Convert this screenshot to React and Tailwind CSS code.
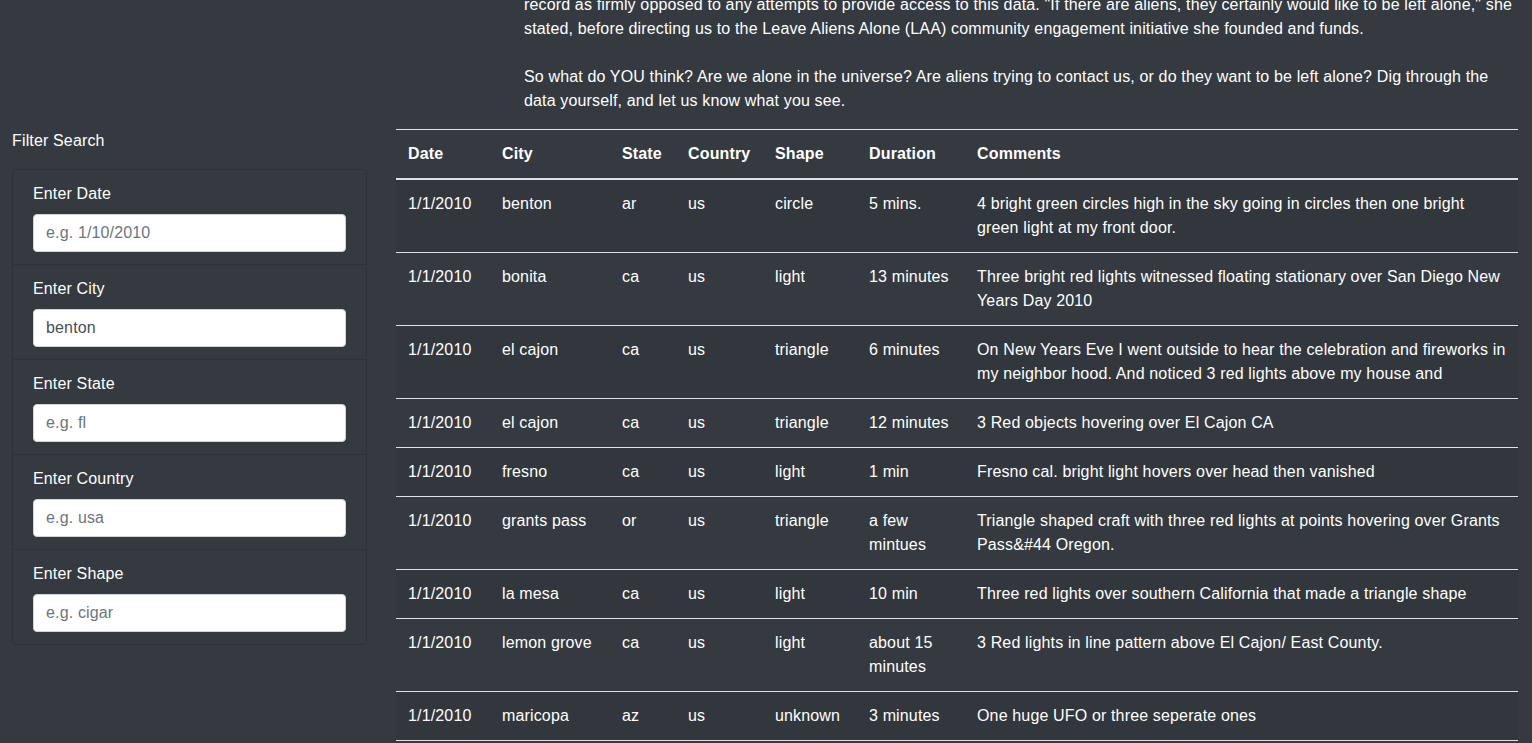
import React from "react";

const sightings = [
  { date: "1/1/2010", city: "benton", state: "ar", country: "us", shape: "circle", duration: "5 mins.", comments: "4 bright green circles high in the sky going in circles then one bright green light at my front door." },
  { date: "1/1/2010", city: "bonita", state: "ca", country: "us", shape: "light", duration: "13 minutes", comments: "Three bright red lights witnessed floating stationary over San Diego New Years Day 2010" },
  { date: "1/1/2010", city: "el cajon", state: "ca", country: "us", shape: "triangle", duration: "6 minutes", comments: "On New Years Eve I went outside to hear the celebration and fireworks in my neighbor hood. And noticed 3 red lights above my house and" },
  { date: "1/1/2010", city: "el cajon", state: "ca", country: "us", shape: "triangle", duration: "12 minutes", comments: "3 Red objects hovering over El Cajon CA" },
  { date: "1/1/2010", city: "fresno", state: "ca", country: "us", shape: "light", duration: "1 min", comments: "Fresno cal. bright light hovers over head then vanished" },
  { date: "1/1/2010", city: "grants pass", state: "or", country: "us", shape: "triangle", duration: "a few mintues", comments: "Triangle shaped craft with three red lights at points hovering over Grants Pass&#44 Oregon." },
  { date: "1/1/2010", city: "la mesa", state: "ca", country: "us", shape: "light", duration: "10 min", comments: "Three red lights over southern California that made a triangle shape" },
  { date: "1/1/2010", city: "lemon grove", state: "ca", country: "us", shape: "light", duration: "about 15 minutes", comments: "3 Red lights in line pattern above El Cajon/ East County." },
  { date: "1/1/2010", city: "maricopa", state: "az", country: "us", shape: "unknown", duration: "3 minutes", comments: "One huge UFO or three seperate ones" },
  { date: "1/1/2010", city: "mesa", state: "az", country: "us", shape: "light", duration: "2 minutes", comments: "Orange lights moving slowly across the night sky" },
];

const filters = [
  { label: "Enter Date", placeholder: "e.g. 1/10/2010", value: "" },
  { label: "Enter City", placeholder: "e.g. benton", value: "benton" },
  { label: "Enter State", placeholder: "e.g. fl", value: "" },
  { label: "Enter Country", placeholder: "e.g. usa", value: "" },
  { label: "Enter Shape", placeholder: "e.g. cigar", value: "" },
];

export default function App() {
  return (
    <div
      className="w-full min-h-screen bg-[#343a40] text-white text-base leading-6 tracking-[0.15px] overflow-hidden"
      style={{ fontFamily: '"Liberation Sans", Arial, sans-serif' }}
    >
      <div className="-mt-[7px] pl-[524px] pr-3">
        <p className="mb-6 whitespace-nowrap">
          <span className="block">record as firmly opposed to any attempts to provide access to this data. "If there are aliens, they certainly would like to be left alone," she</span>
          <span className="block">stated, before directing us to the Leave Aliens Alone (LAA) community engagement initiative she founded and funds.</span>
        </p>
        <p className="mb-4 whitespace-nowrap">
          <span className="block">So what do YOU think? Are we alone in the universe? Are aliens trying to contact us, or do they want to be left alone? Dig through the</span>
          <span className="block">data yourself, and let us know what you see.</span>
        </p>
      </div>

      <div className="flex">
        {/* ── Filters ── */}
        <div className="w-[384px] shrink-0 pl-3 pr-[17px]">
          <p className="mb-4">Filter Search</p>
          <ul className="border border-[#2d3237] rounded">
            {filters.map((f, i) => (
              <li
                key={f.label}
                className={`px-5 py-3 ${i > 0 ? "border-t border-[#2d3237]" : ""}`}
              >
                <label className="block mb-2">{f.label}</label>
                <input
                  type="text"
                  defaultValue={f.value}
                  placeholder={f.placeholder}
                  className="block w-full h-[38px] px-3 bg-white text-[#495057] placeholder:text-[#6c757d] border border-[#ced4da] rounded outline-none"
                />
              </li>
            ))}
          </ul>
        </div>

        {/* ── Results table ── */}
        <div className="flex-1 min-w-0 pl-3 pr-[14px]">
          <table className="w-full table-fixed border-collapse text-left">
            <colgroup>
              <col className="w-[94px]" />
              <col className="w-[120px]" />
              <col className="w-[66px]" />
              <col className="w-[87px]" />
              <col className="w-[94px]" />
              <col className="w-[108px]" />
              <col />
            </colgroup>
            <thead>
              <tr className="border-t border-[#dee2e6] border-b-2">
                {["Date", "City", "State", "Country", "Shape", "Duration", "Comments"].map((h) => (
                  <th key={h} className="p-3 font-bold align-bottom">
                    {h}
                  </th>
                ))}
              </tr>
            </thead>
            <tbody>
              {sightings.map((s, i) => (
                <tr
                  key={i}
                  className={`border-t border-[#dee2e6] ${i % 2 === 0 ? "bg-black/5" : ""}`}
                >
                  <td className="p-3 align-top">{s.date}</td>
                  <td className="p-3 align-top">{s.city}</td>
                  <td className="p-3 align-top">{s.state}</td>
                  <td className="p-3 align-top">{s.country}</td>
                  <td className="p-3 align-top">{s.shape}</td>
                  <td className="p-3 align-top">{s.duration}</td>
                  <td className="p-3 align-top">{s.comments}</td>
                </tr>
              ))}
            </tbody>
          </table>
        </div>
      </div>
    </div>
  );
}
